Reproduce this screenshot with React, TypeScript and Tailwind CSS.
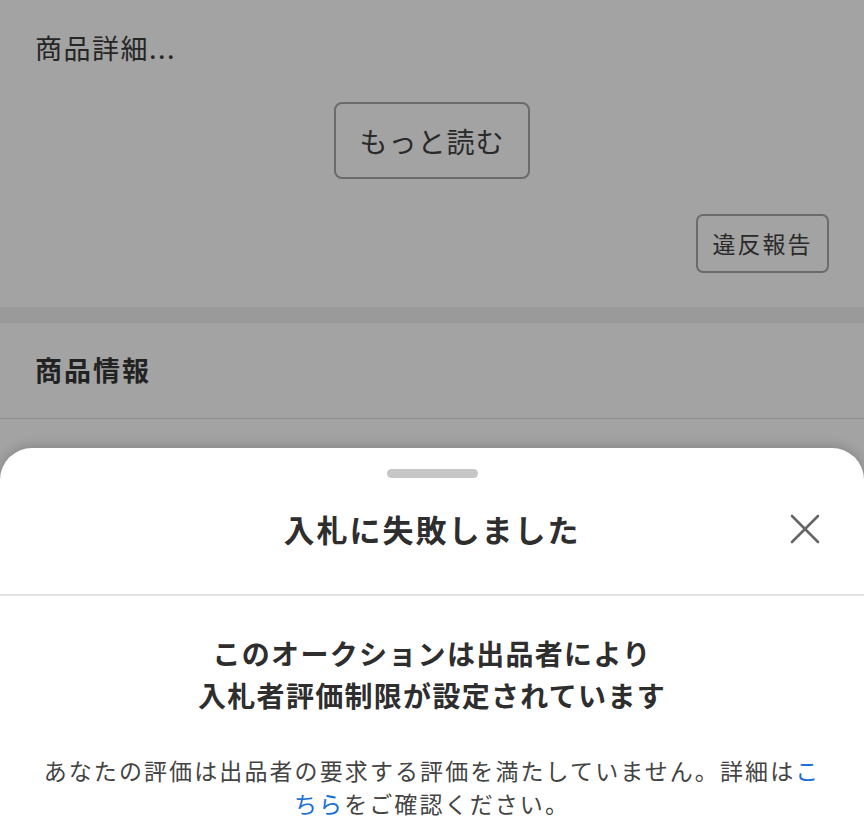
const font = { fontFamily: '"Noto Sans CJK JP", "Noto Sans", sans-serif' };

export default function App() {
  return (
    <div
      className="relative w-[864px] h-[839px] overflow-hidden bg-[#a3a3a3] text-[#262626]"
      style={font}
    >
      {/* description block */}
      <div className="flex flex-col px-[35px] pt-[30px] pb-[34px]">
        <p className="text-[27px] leading-[36px] tracking-[1.5px]">商品詳細...</p>
        <div className="flex justify-center mt-[36px]">
          <button className="w-[196px] h-[77px] border-2 border-[#6b6b6b] rounded-[8px] text-[28px] tracking-[1px] text-[#2a2a2a]">
            もっと読む
          </button>
        </div>
        <div className="flex justify-end mt-[35px]">
          <button className="w-[133px] h-[59px] border-2 border-[#6b6b6b] rounded-[7px] text-[23px] tracking-[2px] text-[#2a2a2a]">
            違反報告
          </button>
        </div>
      </div>

      <div className="h-[16px] bg-[#9a9a9a]" />

      <div className="h-[96px] flex items-center px-[35px] border-b border-[#8c8c8c]">
        <h2 className="text-[27px] font-bold tracking-[2px] text-[#222]">商品情報</h2>
      </div>

      {/* bottom sheet */}
      <div className="absolute left-0 right-0 top-[448px] bottom-0 bg-white rounded-t-[32px] shadow-[0_-2px_12px_rgba(0,0,0,0.18)]">
        <div className="flex justify-center pt-[21px]">
          <div className="w-[91px] h-[9px] rounded-full bg-[#c6c6c6]" />
        </div>
        <div className="relative h-[118px] flex items-center justify-center border-b-2 border-[#e2e2e2]">
          <h1 className="text-[31px] font-bold tracking-[2px] text-[#2e2e2e] -mt-[14px]">入札に失敗しました</h1>
          <button className="absolute right-[44px] top-[36px] text-[#666]">
            <svg width="30" height="30" viewBox="0 0 30 30" fill="none" stroke="currentColor" strokeWidth="2.6" strokeLinecap="round">
              <path d="M2 2 L28 28 M28 2 L2 28" />
            </svg>
          </button>
        </div>
        <div className="px-[38px] pt-[36px] text-center">
          <p className="text-[28px] leading-[42px] font-bold tracking-[1.3px] text-[#2e2e2e]">
            このオークションは出品者により
            <br />
            入札者評価制限が設定されています
          </p>
          <p className="mt-[38px] text-[23px] leading-[33px] tracking-[2.1px] text-[#444]">
            あなたの評価は出品者の要求する評価を満たしていません。詳細は
            <span className="text-[#1a6fd6]">こちら</span>をご確認ください。
          </p>
        </div>
      </div>
    </div>
  );
}
